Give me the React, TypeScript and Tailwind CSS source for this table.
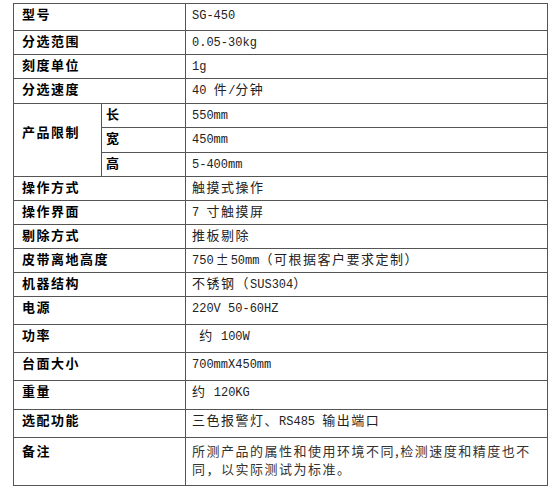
import React from "react";

const rows: { label: string; value: string; h: number }[] = [
  { label: "型号", value: "SG-450", h: 27 },
  { label: "分选范围", value: "0.05-30kg", h: 24 },
  { label: "刻度单位", value: "1g", h: 24 },
  { label: "分选速度", value: "40 件/分钟", h: 25 },
];

const rows2: { label: string; value: string; h: number }[] = [
  { label: "操作方式", value: "触摸式操作", h: 24 },
  { label: "操作界面", value: "7 寸触摸屏", h: 24 },
  { label: "剔除方式", value: "推板剔除", h: 24 },
  { label: "皮带离地高度", value: "750±50mm（可根据客户要求定制）", h: 24 },
  { label: "机器结构", value: "不锈钢（SUS304）", h: 24 },
  { label: "电源", value: "220V 50-60HZ", h: 28 },
  { label: "功率", value: " 约 100W", h: 28 },
  { label: "台面大小", value: "700mmX450mm", h: 28 },
  { label: "重量", value: "约 120KG", h: 29 },
  { label: "选配功能", value: "三色报警灯、RS485 输出端口", h: 28 },
];

const sub = [
  { k: "长", v: "550mm", h: 24 },
  { k: "宽", v: "450mm", h: 25 },
  { k: "高", v: "5-400mm", h: 24 },
];

function Mixed({ text }: { text: string }) {
  const parts = text.match(/[\x20-\x7e]+|[^\x20-\x7e]+/g) || [];
  return (
    <>
      {parts.map((p, i) =>
        /^[\x20-\x7e]+$/.test(p) ? (
          <span
            key={i}
            className="text-[12px] tracking-normal whitespace-pre"
            style={{ fontFamily: '"Liberation Mono", monospace' }}
          >
            {p}
          </span>
        ) : p === "±" ? (
          <span key={i} className="tracking-normal px-[2px]">{p}</span>
        ) : (
          <span key={i}>{p}</span>
        )
      )}
    </>
  );
}

const labelCls =
  "border border-[#555] align-top pl-[8px] pt-[1px] font-bold text-[13px] leading-[18px] tracking-[1.5px] text-black";
const valueCls =
  "border border-[#555] align-top pl-[6px] pt-[1px] text-[13px] leading-[18px] tracking-[1.5px] text-[#222]";

export default function App() {
  return (
    <div
      className="w-[554px] h-[490px] bg-white pt-[3px] pl-[13px]"
      style={{ fontFamily: '"Noto Sans CJK SC", "Liberation Sans", sans-serif' }}
    >
      <table className="border-collapse w-[534px] table-fixed">
        <colgroup>
          <col className="w-[88px]" />
          <col className="w-[84px]" />
          <col className="w-[362px]" />
        </colgroup>
        <tbody>
          {rows.map((r) => (
            <tr key={r.label} style={{ height: r.h }}>
              <td colSpan={2} className={labelCls}>{r.label}</td>
              <td className={valueCls}><Mixed text={r.value} /></td>
            </tr>
          ))}
          {sub.map((s, i) => (
            <tr key={s.k} style={{ height: s.h }}>
              {i === 0 && (
                <td
                  rowSpan={3}
                  className="border border-[#555] align-top pl-[8px] pt-[19px] font-bold text-[13px] leading-[18px] tracking-[1.5px] text-black"
                >
                  产品限制
                </td>
              )}
              <td className="border border-[#555] align-top pl-[4px] pt-[1px] font-bold text-[13px] leading-[18px] text-black">
                {s.k}
              </td>
              <td className={valueCls}><Mixed text={s.v} /></td>
            </tr>
          ))}
          {rows2.map((r) => (
            <tr key={r.label} style={{ height: r.h }}>
              <td colSpan={2} className={labelCls}>{r.label}</td>
              <td className={valueCls}><Mixed text={r.value} /></td>
            </tr>
          ))}
          <tr style={{ height: 48 }}>
            <td
              colSpan={2}
              className="border border-[#555] align-top pl-[8px] pt-[4px] font-bold text-[13px] leading-[18px] tracking-[1.5px] text-black"
            >
              备注
            </td>
            <td className="border border-[#555] align-top pl-[6px] pt-[4px] text-[13px] leading-[18px] tracking-[1.5px] text-[#333]">
              所测产品的属性和使用环境不同,检测速度和精度也不同，以实际测试为标准。
            </td>
          </tr>
        </tbody>
      </table>
    </div>
  );
}
